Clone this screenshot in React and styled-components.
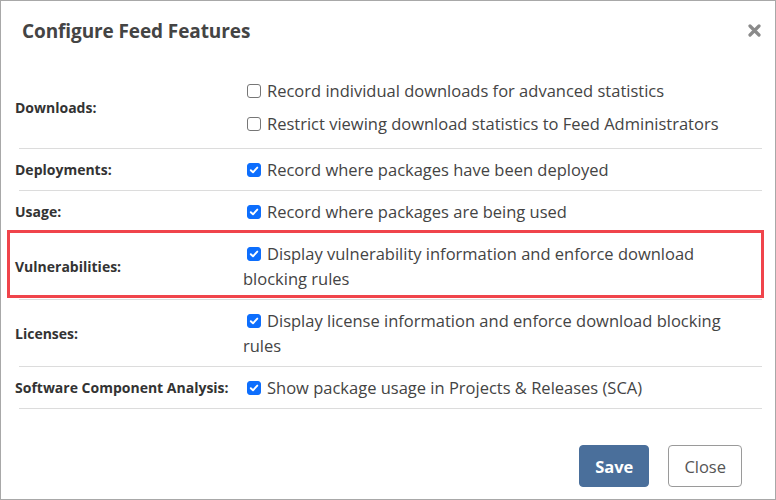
import React from 'react';
import styled, { createGlobalStyle } from 'styled-components';

const GlobalStyle = createGlobalStyle`
  html, body {
    margin: 0;
    padding: 0;
    background: #fff;
  }
  body {
    font-family: "Open Sans", "Noto Sans", Arial, sans-serif;
    color: #444;
  }
`;

const Dialog = styled.div`
  box-sizing: border-box;
  width: 776px;
  height: 500px;
  border: 1px solid #a8a8a8;
  display: flex;
  flex-direction: column;
  background: #fff;
`;

const Header = styled.div`
  display: flex;
  align-items: center;
  justify-content: space-between;
  padding: 16px 13px 0 21px;
  height: 28px;
`;

const Title = styled.h2`
  margin: 0;
  font-size: 19px;
  font-weight: 700;
  color: #444;
  letter-spacing: -0.1px;
`;

const CloseX = styled.button`
  border: 0;
  background: none;
  padding: 0;
  width: 14px;
  height: 14px;
  cursor: pointer;
  display: flex;
`;

const Body = styled.div`
  padding: 21px 13px 0 18px;
`;

const Row = styled.div`
  position: relative;
  display: grid;
  grid-template-columns: 224px 1fr;
  align-items: center;
  border-bottom: 1px solid #dcdcdc;
  padding: ${p => (p.$spacious ? '12px 0' : '8px 0')};

  ${p =>
    p.$highlight &&
    `
    &::before {
      content: '';
      position: absolute;
      top: -3px;
      bottom: 1px;
      left: -12px;
      right: -2px;
      border: 3px solid #f0444b;
      pointer-events: none;
    }
  `}
`;

const Label = styled.div`
  margin-left: -4px;
  font-size: 14px;
  font-weight: 700;
  color: #333;
`;

const Options = styled.div`
  display: flex;
  flex-direction: column;
  gap: 8px;
  padding-right: 10px;
`;

const Option = styled.label`
  font-size: 16.5px;
  line-height: 25px;
  color: #444;
`;

const Box = styled.span`
  display: inline-block;
  box-sizing: border-box;
  width: 14px;
  height: 14px;
  margin: 0 6px 0 4px;
  vertical-align: -1px;
  border-radius: 3px;
  border: 1px solid ${p => (p.$checked ? '#0d6efd' : '#767676')};
  background: ${p => (p.$checked ? '#0d6efd' : '#fff')};
  position: relative;

  svg {
    position: absolute;
    left: 1px;
    top: 1px;
  }
`;

const Footer = styled.div`
  margin-top: auto;
  display: flex;
  justify-content: flex-end;
  gap: 19px;
  padding: 0 33px 12px 0;
`;

const Button = styled.button`
  font-family: inherit;
  font-size: 16.5px;
  height: 42px;
  border-radius: 4px;
  padding: 0 15px;
  cursor: pointer;
  font-weight: ${p => (p.$primary ? 700 : 400)};
  color: ${p => (p.$primary ? '#fff' : '#555')};
  background: ${p => (p.$primary ? '#4a6f9b' : '#fff')};
  border: 1px solid ${p => (p.$primary ? '#4a6f9b' : '#9a9a9a')};
`;

function Check({ checked, children }) {
  return (
    <Option>
      <Box $checked={checked}>
        {checked && (
          <svg width="10" height="10" viewBox="0 0 10 10">
            <path d="M1.8 5.2 L4 7.3 L8.3 2.6" fill="none" stroke="#fff" strokeWidth="1.9" strokeLinecap="round" strokeLinejoin="round" />
          </svg>
        )}
      </Box>
      {children}
    </Option>
  );
}

const rows = [
  {
    label: 'Downloads:',
    options: [
      { checked: false, text: 'Record individual downloads for advanced statistics' },
      { checked: false, text: 'Restrict viewing download statistics to Feed Administrators' },
    ],
  },
  { label: 'Deployments:', options: [{ checked: true, text: 'Record where packages have been deployed' }] },
  { label: 'Usage:', options: [{ checked: true, text: 'Record where packages are being used' }] },
  {
    label: 'Vulnerabilities:',
    highlight: true,
    options: [{ checked: true, text: 'Display vulnerability information and enforce download blocking rules' }],
  },
  {
    label: 'Licenses:',
    options: [{ checked: true, text: 'Display license information and enforce download blocking rules' }],
  },
  {
    label: 'Software Component Analysis:',
    options: [{ checked: true, text: 'Show package usage in Projects & Releases (SCA)' }],
  },
];

export default function App() {
  return (
    <>
      <GlobalStyle />
      <Dialog>
        <Header>
          <Title>Configure Feed Features</Title>
          <CloseX aria-label="Close">
            <svg width="13" height="13" viewBox="0 0 13 13">
              <path d="M2 2 L11 11 M11 2 L2 11" stroke="#8a8a8a" strokeWidth="3.2" strokeLinecap="round" />
            </svg>
          </CloseX>
        </Header>
        <Body>
          {rows.map(r => (
            <Row key={r.label} $spacious={r.options.length > 1} $highlight={r.highlight}>
              <Label>{r.label}</Label>
              <Options>
                {r.options.map(o => (
                  <Check key={o.text} checked={o.checked}>{o.text}</Check>
                ))}
              </Options>
            </Row>
          ))}
        </Body>
        <Footer>
          <Button $primary>Save</Button>
          <Button>Close</Button>
        </Footer>
      </Dialog>
    </>
  );
}
